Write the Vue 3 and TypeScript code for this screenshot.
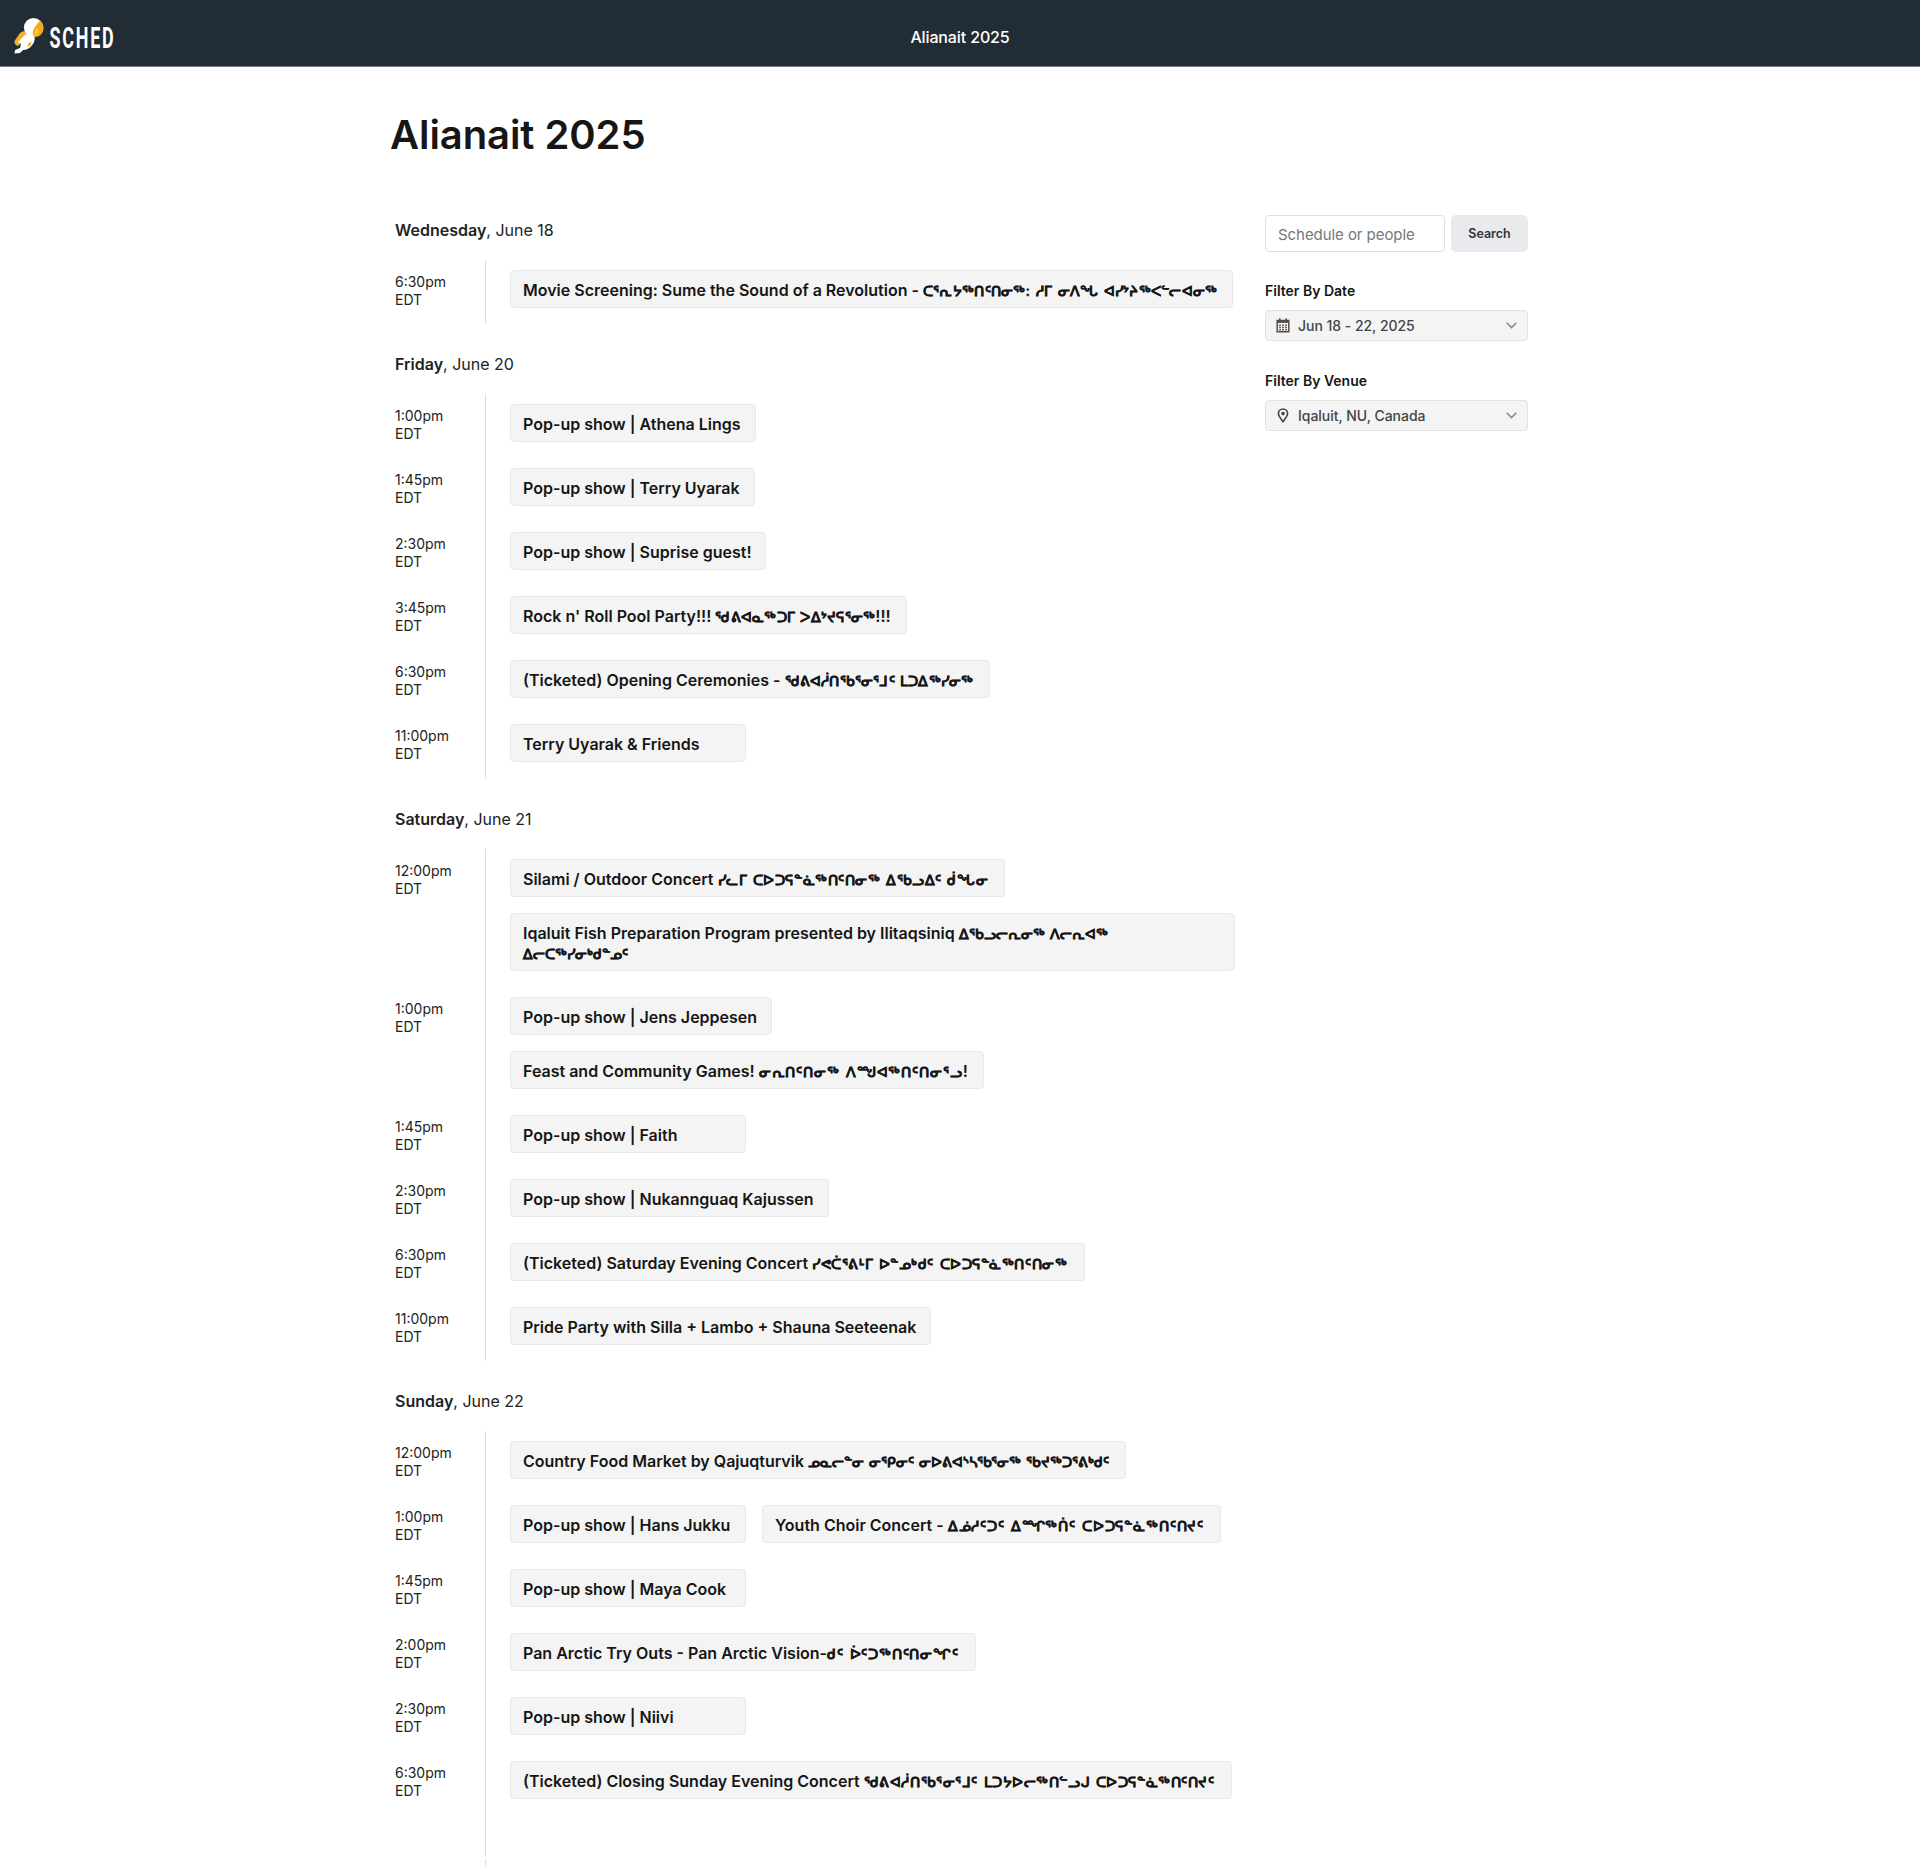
<script setup lang="ts">
interface Run {
  text: string
  syllabic?: boolean
  spacing?: number
  br?: boolean
}
interface Session {
  runs: Run[]
  width?: number
}
interface Slot {
  time: string
  sessions: Session[]
}
interface Day {
  weekday: string
  date: string
  slots: Slot[]
}

const latin = (text: string, width?: number): Session => ({ runs: [{ text }], width })
const mixed = (width: number, spacing: number, ...parts: string[]): Session => ({
  width,
  runs: parts.map((text) => {
    if (text === '\n') return { text: '', br: true }
    return /[\u1400-\u167f]/.test(text) ? { text, syllabic: true, spacing } : { text }
  }),
})

const days: Day[] = [
  {
    weekday: 'Wednesday',
    date: 'June 18',
    slots: [
      {
        time: '6:30pm',
        sessions: [mixed(723, 0.26, 'Movie Screening: Sume the Sound of a Revolution - ', 'ᑕᕐᕆᔭᖅᑎᑦᑎᓂᖅ: ᓱᒥ ᓂᐱᖓ ᐊᓯᔾᔨᖅᐸᓪᓕᐊᓂᖅ')],
      },
    ],
  },
  {
    weekday: 'Friday',
    date: 'June 20',
    slots: [
      { time: '1:00pm', sessions: [latin('Pop-up show | Athena Lings', 246)] },
      { time: '1:45pm', sessions: [latin('Pop-up show | Terry Uyarak', 245)] },
      { time: '2:30pm', sessions: [latin('Pop-up show | Suprise guest!', 256)] },
      { time: '3:45pm', sessions: [mixed(397, 0.24, "Rock n' Roll Pool Party!!! ", 'ᖁᕕᐊᓇᖅᑐᒥ ᐳᐃᔾᔪᕋᕐᓂᖅ', '!!!')] },
      { time: '6:30pm', sessions: [mixed(480, 0.2, '(Ticketed) Opening Ceremonies - ', 'ᖁᕕᐊᓲᑎᖃᕐᓂᕐᒧᑦ ᒪᑐᐃᖅᓯᓂᖅ')] },
      { time: '11:00pm', sessions: [latin('Terry Uyarak & Friends')] },
    ],
  },
  {
    weekday: 'Saturday',
    date: 'June 21',
    slots: [
      {
        time: '12:00pm',
        sessions: [
          mixed(495, 0.55, 'Silami / Outdoor Concert ', 'ᓯᓚᒥ ᑕᐅᑐᕋᓐᓈᖅᑎᑦᑎᓂᖅ ᐃᖃᓗᐃᑦ ᑰᖓᓂ'),
          mixed(725, 0.02, 'Iqaluit Fish Preparation Program presented by Ilitaqsiniq ', 'ᐃᖃᓗᓕᕆᓂᖅ ᐱᓕᕆᐊᖅ', '\n', 'ᐃᓕᑕᖅᓯᓂᒃᑯᓐᓄᑦ'),
        ],
      },
      {
        time: '1:00pm',
        sessions: [
          latin('Pop-up show | Jens Jeppesen', 262),
          mixed(474, 0.88, 'Feast and Community Games! ', 'ᓂᕆᑎᑦᑎᓂᖅ ᐱᙳᐊᖅᑎᑦᑎᓂᕐᓗ', '!'),
        ],
      },
      { time: '1:45pm', sessions: [latin('Pop-up show | Faith')] },
      { time: '2:30pm', sessions: [latin('Pop-up show | Nukannguaq Kajussen', 319)] },
      { time: '6:30pm', sessions: [mixed(575, 0.55, '(Ticketed) Saturday Evening Concert ', 'ᓯᕙᑖᕐᕕᒻᒥ ᐅᓐᓄᒃᑯᑦ ᑕᐅᑐᕋᓐᓈᖅᑎᑦᑎᓂᖅ')] },
      { time: '11:00pm', sessions: [latin('Pride Party with Silla + Lambo + Shauna Seeteenak', 421)] },
    ],
  },
  {
    weekday: 'Sunday',
    date: 'June 22',
    slots: [
      { time: '12:00pm', sessions: [mixed(616, -0.04, 'Country Food Market by Qajuqturvik ', 'ᓄᓇᓕᓐᓂ ᓂᕿᓂᑦ ᓂᐅᕕᐊᔅᓴᖃᕐᓂᖅ ᖃᔪᖅᑐᕐᕕᒃᑯᑦ')] },
      {
        time: '1:00pm',
        sessions: [
          latin('Pop-up show | Hans Jukku'),
          mixed(459, 0.85, 'Youth Choir Concert - ', 'ᐃᓅᓱᑦᑐᑦ ᐃᙱᖅᑏᑦ ᑕᐅᑐᕋᓐᓈᖅᑎᑦᑎᔪᑦ'),
        ],
      },
      { time: '1:45pm', sessions: [latin('Pop-up show | Maya Cook')] },
      { time: '2:00pm', sessions: [mixed(466, 0.81, 'Pan Arctic Try Outs - Pan Arctic Vision-', 'ᑯᑦ ᐆᑦᑐᖅᑎᑦᑎᓂᖏᑦ')] },
      { time: '2:30pm', sessions: [latin('Pop-up show | Niivi')] },
      { time: '6:30pm', sessions: [mixed(722, 0.56, '(Ticketed) Closing Sunday Evening Concert ', 'ᖁᕕᐊᓲᑎᖃᕐᓂᕐᒧᑦ ᒪᑐᔭᐅᓕᖅᑎᓪᓗᒍ ᑕᐅᑐᕋᓐᓈᖅᑎᑦᑎᔪᑦ')] },
    ],
  },
]
</script>

<template>
  <div class="page">
    <header class="topbar">
      <svg class="logo" width="180" height="48" viewBox="0 0 180 48">
        <path d="M7 21 Q10 18 14 20 L12 27 L5 34 Q1 33 1.500 29 Z" fill="#f2b02c" />
        <path d="M12 23 Q16 19 21 23 Q23 27 20 32 Q16 38 10 38 L7 41 L1.500 41.500 L2 38 L7 36 L8 32 L5 30 Z" fill="#fff" />
        <path d="M15 31.500 L18.500 29.500 L17.500 34 L14.500 34.500 Z" fill="#f2b02c" />
        <circle cx="20.500" cy="15.500" r="9.600" fill="#fff" />
        <path d="M27 8.500 Q32 13 30 19.500 Q27 26 20.500 24.500 Q18.500 20 21.500 15.500 Z" fill="#f2a81f" />
        <path d="M23 16 Q20.500 19.500 21.500 24 Q25 23.500 26 19 Q26 16 23 16 Z" fill="#f9c23c" />
        <text x="36.500" y="35.500" textLength="66" lengthAdjust="spacingAndGlyphs">SCHED</text>
      </svg>
      <span class="event-name">Alianait 2025</span>
    </header>
    <main class="content">
      <h1>Alianait 2025</h1>
      <div class="columns">
        <div class="schedule">
          <section v-for="day in days" :key="day.weekday" class="day">
            <h2><b>{{ day.weekday }}</b>, {{ day.date }}</h2>
            <div class="slots">
              <div v-for="slot in day.slots" :key="slot.time" class="slot">
                <div class="time">{{ slot.time }}<br />EDT</div>
                <div class="sessions">
                  <a v-for="(s, i) in slot.sessions" :key="i" class="session" :style="s.width ? { width: s.width + 'px' } : {}"><template v-for="(r, j) in s.runs" :key="j"><br v-if="r.br" /><span v-else :class="{ syllabic: r.syllabic }" :style="r.spacing ? { letterSpacing: r.spacing + 'px' } : {}">{{ r.text }}</span></template></a>
                </div>
              </div>
            </div>
          </section>
          <div class="rail-end"></div>
        </div>
        <aside class="sidebar">
          <form class="search">
            <input type="text" placeholder="Schedule or people" />
            <button type="button">Search</button>
          </form>
          <h3>Filter By Date</h3>
          <div class="select">
            <svg width="14" height="15" viewBox="0 0 14 15" fill="none" stroke="#554d48">
              <path d="M1.2 2.500h11.600v11.300H1.200z" stroke-width="1.500" />
              <path d="M1 3.800h12" stroke-width="2.200" />
              <path d="M3.800 .3v3M10.200 .3v3" stroke-width="1.500" />
              <path d="M3.200 7.200h1.700M6.150 7.200h1.700M9.100 7.200h1.700M3.200 9.500h1.700M6.150 9.500h1.700M9.100 9.500h1.700M3.200 11.800h1.700M6.150 11.800h1.700M9.100 11.800h1.700" stroke-width="1.500" />
            </svg>
            <span>Jun 18 - 22, 2025</span>
            <svg class="chevron" width="11" height="7" viewBox="0 0 11 7" fill="none" stroke="#8a8a8a" stroke-width="1.500"><path d="M.7 .8 5.500 5.600 10.300 .8" /></svg>
          </div>
          <h3>Filter By Venue</h3>
          <div class="select">
            <svg width="14" height="15" viewBox="0 0 14 15" fill="none" stroke="#444">
              <path d="M7 13.600C5 11 2.400 8.200 2.400 5.600a4.600 4.600 0 0 1 9.200 0C11.600 8.200 9 11 7 13.600Z" stroke-width="1.600" />
              <circle cx="7" cy="5.600" r="1.800" fill="#444" stroke="none" />
            </svg>
            <span>Iqaluit, NU, Canada</span>
            <svg class="chevron" width="11" height="7" viewBox="0 0 11 7" fill="none" stroke="#8a8a8a" stroke-width="1.500"><path d="M.7 .8 5.500 5.600 10.300 .8" /></svg>
          </div>
        </aside>
      </div>
    </main>
  </div>
</template>

<style>
body {
  margin: 0;
  background: #fff;
}
</style>

<style scoped>
.page {
  height: 1866px;
  overflow: hidden;
  font-family: Inter, 'Liberation Sans', sans-serif;
  color: #161616;
}
.topbar {
  box-sizing: border-box;
  height: 67px;
  background: #222c34;
  border-bottom: 1px solid #767c82;
  display: grid;
  grid-template-columns: 1fr auto 1fr;
  align-items: start;
}
.logo {
  margin: 12px 0 0 13px;
}
.logo text {
  font: 700 30px Roboto, sans-serif;
  letter-spacing: 3px;
  fill: #fff;
}
.event-name {
  color: #fff;
  font-size: 16px;
  font-weight: 500;
  letter-spacing: -0.13px;
  line-height: 20px;
  margin-top: 27px;
}
.content {
  width: 1138px;
  margin: 0 auto;
}
h1 {
  margin: 43.5px 0 0 -1px;
  font-size: 40px;
  line-height: 48px;
  font-weight: 600;
  letter-spacing: -0.08px;
}
.columns {
  display: flex;
  justify-content: space-between;
  margin-top: 56.5px;
}
.schedule {
  width: 845px;
  padding-left: 4px;
  box-sizing: border-box;
}
.day {
  padding-bottom: 25px;
}
.day:nth-child(2) {
  padding-bottom: 26px;
}
.day:nth-child(4) {
  padding-bottom: 3px;
}
h2 {
  margin: 0;
  font-size: 16px;
  font-weight: 400;
  line-height: 30px;
  height: 45px;
  color: #222;
}
h2 b {
  font-weight: 600;
}
.slot {
  display: flex;
}
.time {
  width: 90px;
  box-sizing: border-box;
  padding-top: 12.5px;
  font-size: 14px;
  line-height: 18px;
  color: #222;
}
.sessions {
  flex: 1;
  display: flex;
  flex-wrap: wrap;
  gap: 16px;
  padding: 10px 0 16px 24px;
  border-left: 1px solid #ddd;
}
.day:nth-child(4) .slot:last-child .sessions {
  padding-bottom: 58px;
}
.rail-end {
  height: 7px;
  margin-left: 90px;
  border-left: 1px solid #ddd;
}
.session {
  box-sizing: border-box;
  min-width: 236px;
  min-height: 38px;
  padding: 9px 12px 7px;
  border: 1px solid #e8e8e8;
  border-radius: 4px;
  background: #f4f4f4;
  font-size: 16px;
  font-weight: 600;
  line-height: 20px;
  white-space: nowrap;
}
.session span {
  white-space: pre;
}
.session .syllabic {
  font-size: 14.2px;
  line-height: 1;
  word-spacing: 1.5px;
  -webkit-text-stroke: 0.25px #161616;
}
.sidebar {
  width: 263px;
  margin-right: 1px;
}
.search {
  display: flex;
  justify-content: space-between;
}
input {
  box-sizing: border-box;
  width: 180px;
  height: 37px;
  padding: 2px 12px 0;
  border: 1px solid #dedede;
  border-radius: 4px;
  font: 15px Inter, sans-serif;
  letter-spacing: -0.06px;
}
input::placeholder {
  color: #777;
}
button {
  width: 77px;
  height: 37px;
  padding-bottom: 2px;
  border: 0;
  border-radius: 5px;
  background: #e8eaed;
  font: 600 12.5px Inter, sans-serif;
  color: #333;
}
h3 {
  margin: 30px 0 9px;
  font-size: 14px;
  line-height: 20px;
  font-weight: 600;
}
.search + h3 {
  margin-top: 29px;
}
.select {
  box-sizing: border-box;
  height: 31px;
  padding: 0 10px;
  border: 1px solid #e2e2e2;
  border-radius: 4px;
  background: #f4f4f4;
  display: flex;
  align-items: center;
  gap: 8px;
  font-size: 14px;
  font-weight: 500;
  letter-spacing: -0.03px;
  color: #444;
}
.chevron {
  margin-left: auto;
}
</style>
